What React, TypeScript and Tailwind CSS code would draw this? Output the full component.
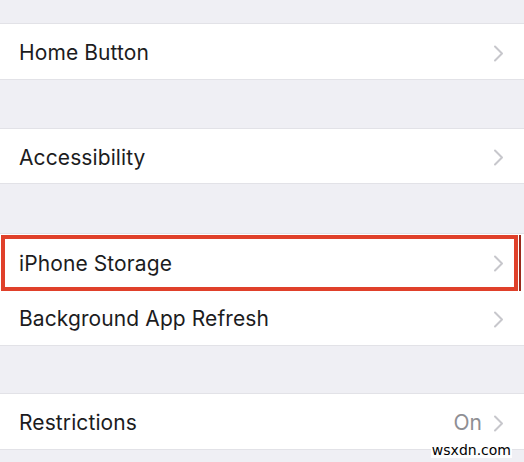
import React from "react";

const Chevron = () => (
  <svg width="12" height="17" viewBox="0 0 12 17" fill="none" className="shrink-0">
    <path d="M2 1.5 L9 8.5 L2 15.5" stroke="#c7c7cc" strokeWidth="2" strokeLinecap="round" strokeLinejoin="round" />
  </svg>
);

const Row = ({ label, value, h, border = true }: { label: string; value?: string; h: string; border?: boolean }) => (
  <div className={`flex items-center justify-between bg-white pl-[19px] pr-[19px] pt-[3px] ${h} ${border ? "border-y border-[#e2e2e7]" : ""}`}>
    <span className="text-[21px] text-[#1c1c1e] tracking-[0.1px]">{label}</span>
    <div className="flex items-center gap-[11px]">
      {value && <span className="text-[21px] text-[#8e8e93]">{value}</span>}
      <Chevron />
    </div>
  </div>
);

export default function App() {
  return (
    <div
      className="relative w-[524px] h-[462px] overflow-hidden bg-[#efeff4] flex flex-col"
      style={{ fontFamily: "Inter, 'Liberation Sans', sans-serif" }}
    >
      <div className="h-[23px] shrink-0" />
      <Row label="Home Button" h="h-[57px]" />
      <div className="h-[48px] shrink-0" />
      <Row label="Accessibility" h="h-[56px]" />
      <div className="h-[49px] shrink-0" />
      <div className="relative border-y border-[#e2e2e7] bg-white">
        <Row label="iPhone Storage" h="h-[56px]" border={false} />
        <Row label="Background App Refresh" h="h-[55px]" border={false} />
        {/* red highlight */}
        <div className="absolute left-[1px] top-[1px] w-[517px] h-[56px] border-[4px] border-[#e0402a] pointer-events-none" />
        <div className="absolute left-[519px] top-[1px] w-[2px] h-[56px] bg-[#9a2a1c] pointer-events-none" />
      </div>
      <div className="h-[47px] shrink-0" />
      <Row label="Restrictions" value="On" h="h-[57px]" />
      <div className="absolute right-[12px] bottom-[4px] bg-white/90 px-[1px] text-[14px] leading-[16px] text-black" style={{ fontFamily: "'DejaVu Sans', sans-serif" }}>
        wsxdn.com
      </div>
    </div>
  );
}
